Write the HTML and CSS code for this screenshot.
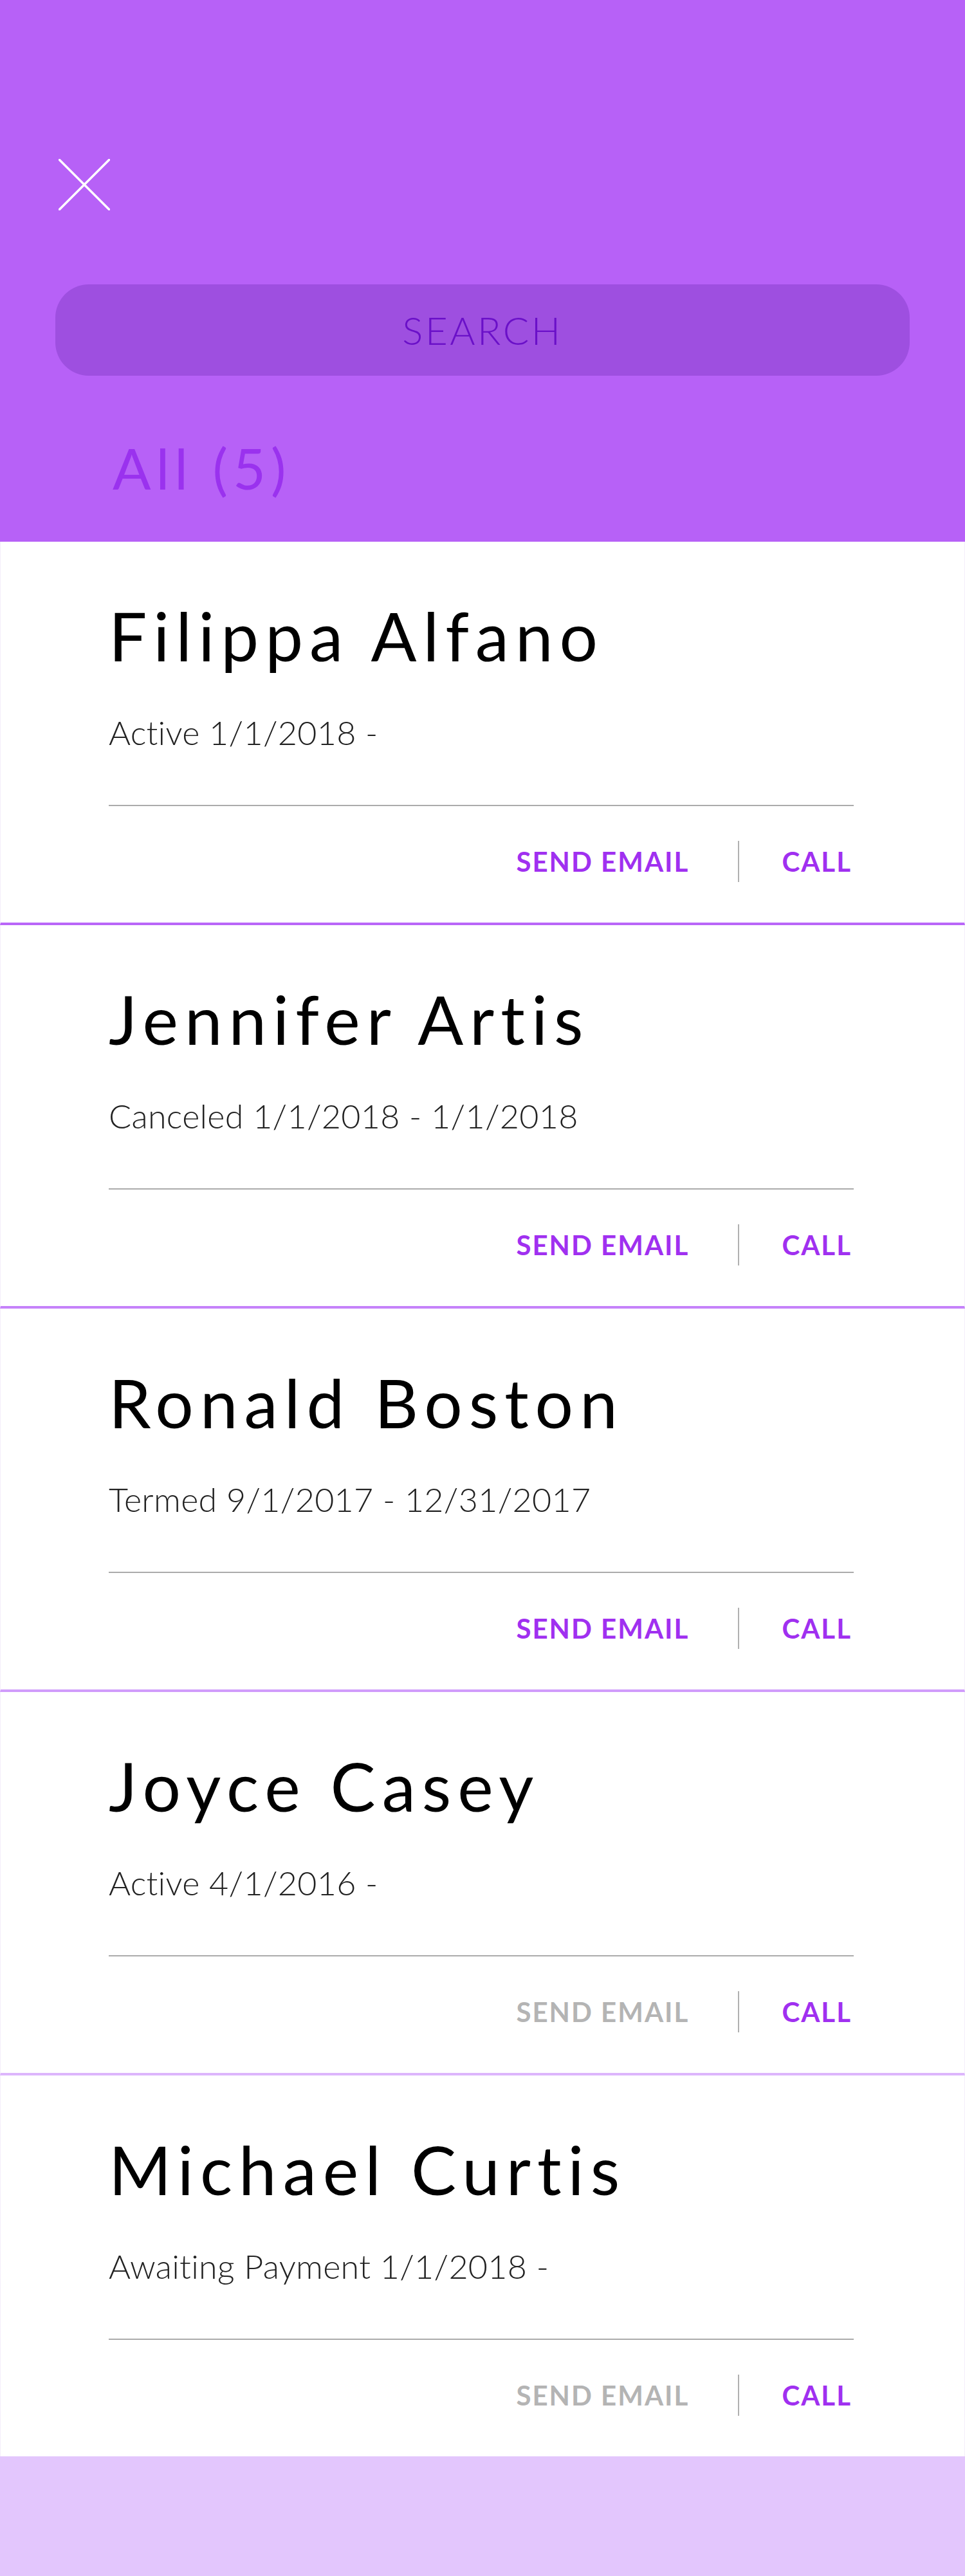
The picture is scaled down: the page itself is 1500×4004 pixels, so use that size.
FILE: index.html
```html
<!DOCTYPE html>
<html lang="en">
<head>
<meta charset="utf-8">
<title>Members</title>
<link rel="stylesheet" href="styles.css">
</head>
<body>
<header class="top">
  <button class="close" aria-label="Close">
    <svg width="80" height="80" viewBox="0 0 80 80"><path d="M1.5 1.5 L78.5 78.5 M78.5 1.5 L1.5 78.5" stroke="#fff" stroke-width="3.5" stroke-linecap="round" fill="none"/></svg>
  </button>
  <div class="search">SEARCH</div>
  <div class="count">All (5)</div>
</header>
<main class="list">
  <section class="card b1">
    <h2 class="name">Filippa Alfano</h2>
    <p class="status">Active 1/1/2018 -</p>
    <hr class="rule">
    <div class="actions"><span class="act">SEND EMAIL</span><span class="sep"></span><span class="act">CALL</span></div>
  </section>
  <section class="card b2">
    <h2 class="name">Jennifer Artis</h2>
    <p class="status">Canceled 1/1/2018 - 1/1/2018</p>
    <hr class="rule">
    <div class="actions"><span class="act">SEND EMAIL</span><span class="sep"></span><span class="act">CALL</span></div>
  </section>
  <section class="card b3">
    <h2 class="name">Ronald Boston</h2>
    <p class="status">Termed 9/1/2017 - 12/31/2017</p>
    <hr class="rule">
    <div class="actions"><span class="act">SEND EMAIL</span><span class="sep"></span><span class="act">CALL</span></div>
  </section>
  <section class="card b4">
    <h2 class="name">Joyce Casey</h2>
    <p class="status">Active 4/1/2016 -</p>
    <hr class="rule">
    <div class="actions"><span class="act off">SEND EMAIL</span><span class="sep"></span><span class="act">CALL</span></div>
  </section>
  <section class="card last">
    <h2 class="name">Michael Curtis</h2>
    <p class="status">Awaiting Payment 1/1/2018 -</p>
    <hr class="rule">
    <div class="actions"><span class="act off">SEND EMAIL</span><span class="sep"></span><span class="act">CALL</span></div>
  </section>
</main>
<footer class="foot"></footer>
</body>
</html>
```

FILE: styles.css
```css
* { box-sizing: border-box; }
html, body { margin: 0; padding: 0; }
body {
  width: 1500px;
  font-family: Lato, "Open Sans", "Liberation Sans", sans-serif;
  background: #ffffff;
  color: #000;
}
.top {
  height: 842px;
  background: #b761f7;
  padding: 247px 86px 0 86px;
  display: flex;
  flex-direction: column;
}
.close {
  width: 80px;
  height: 80px;
  margin-left: 5px;
  padding: 0;
  border: 0;
  background: none;
  display: block;
}
.close svg { display: block; }
.search {
  margin-top: 115px;
  height: 142px;
  border-radius: 52px;
  background: #9e4fe0;
  color: #6a10c8;
  font-size: 60px;
  font-weight: 300;
  letter-spacing: 3.5px;
  display: flex;
  align-items: center;
  justify-content: center;
}
.count {
  margin-top: 99px;
  margin-left: 89px;
  font-size: 88px;
  line-height: 88px;
  font-weight: 400;
  color: #9a32ee;
  letter-spacing: 8px;
}
.card {
  height: 596px;
  padding: 93px 172px 0 168px;
  border-left: 1px solid #f4eefb;
  border-right: 1px solid #f4eefb;
  border-bottom: 4px solid #b966f8;
  display: flex;
  flex-direction: column;
}
.card.b2 { border-bottom-color: #c582fa; }
.card.b3 { border-bottom-color: #d09cfb; }
.card.b4 { border-bottom-color: #ddb6fc; }
.card.last { height: 592px; border-bottom: 0; }
.name {
  margin: 0;
  font-size: 105px;
  line-height: 105px;
  font-weight: 400;
  letter-spacing: 10px;
}
.status {
  margin: 72px 0 0 0;
  font-size: 52px;
  line-height: 52px;
  font-weight: 300;
  letter-spacing: 0.3px;
  color: #222;
}
.rule {
  margin: 87px 0 0 0;
  border: 0;
  height: 2px;
  background: #ababab;
}
.actions {
  margin-top: 54px;
  height: 64px;
  display: flex;
  align-items: center;
  justify-content: flex-end;
  padding-right: 3px;
}
.act {
  font-size: 42px;
  line-height: 42px;
  font-weight: 700;
  letter-spacing: 2px;
  color: #a030f0;
}
.act.off { color: #b4b4b4; }
.sep {
  width: 2px;
  height: 64px;
  background: #b0b0b0;
  margin: 0 66px 0 76px;
}
.foot {
  height: 186px;
  background: #e3c6fd;
}
```
